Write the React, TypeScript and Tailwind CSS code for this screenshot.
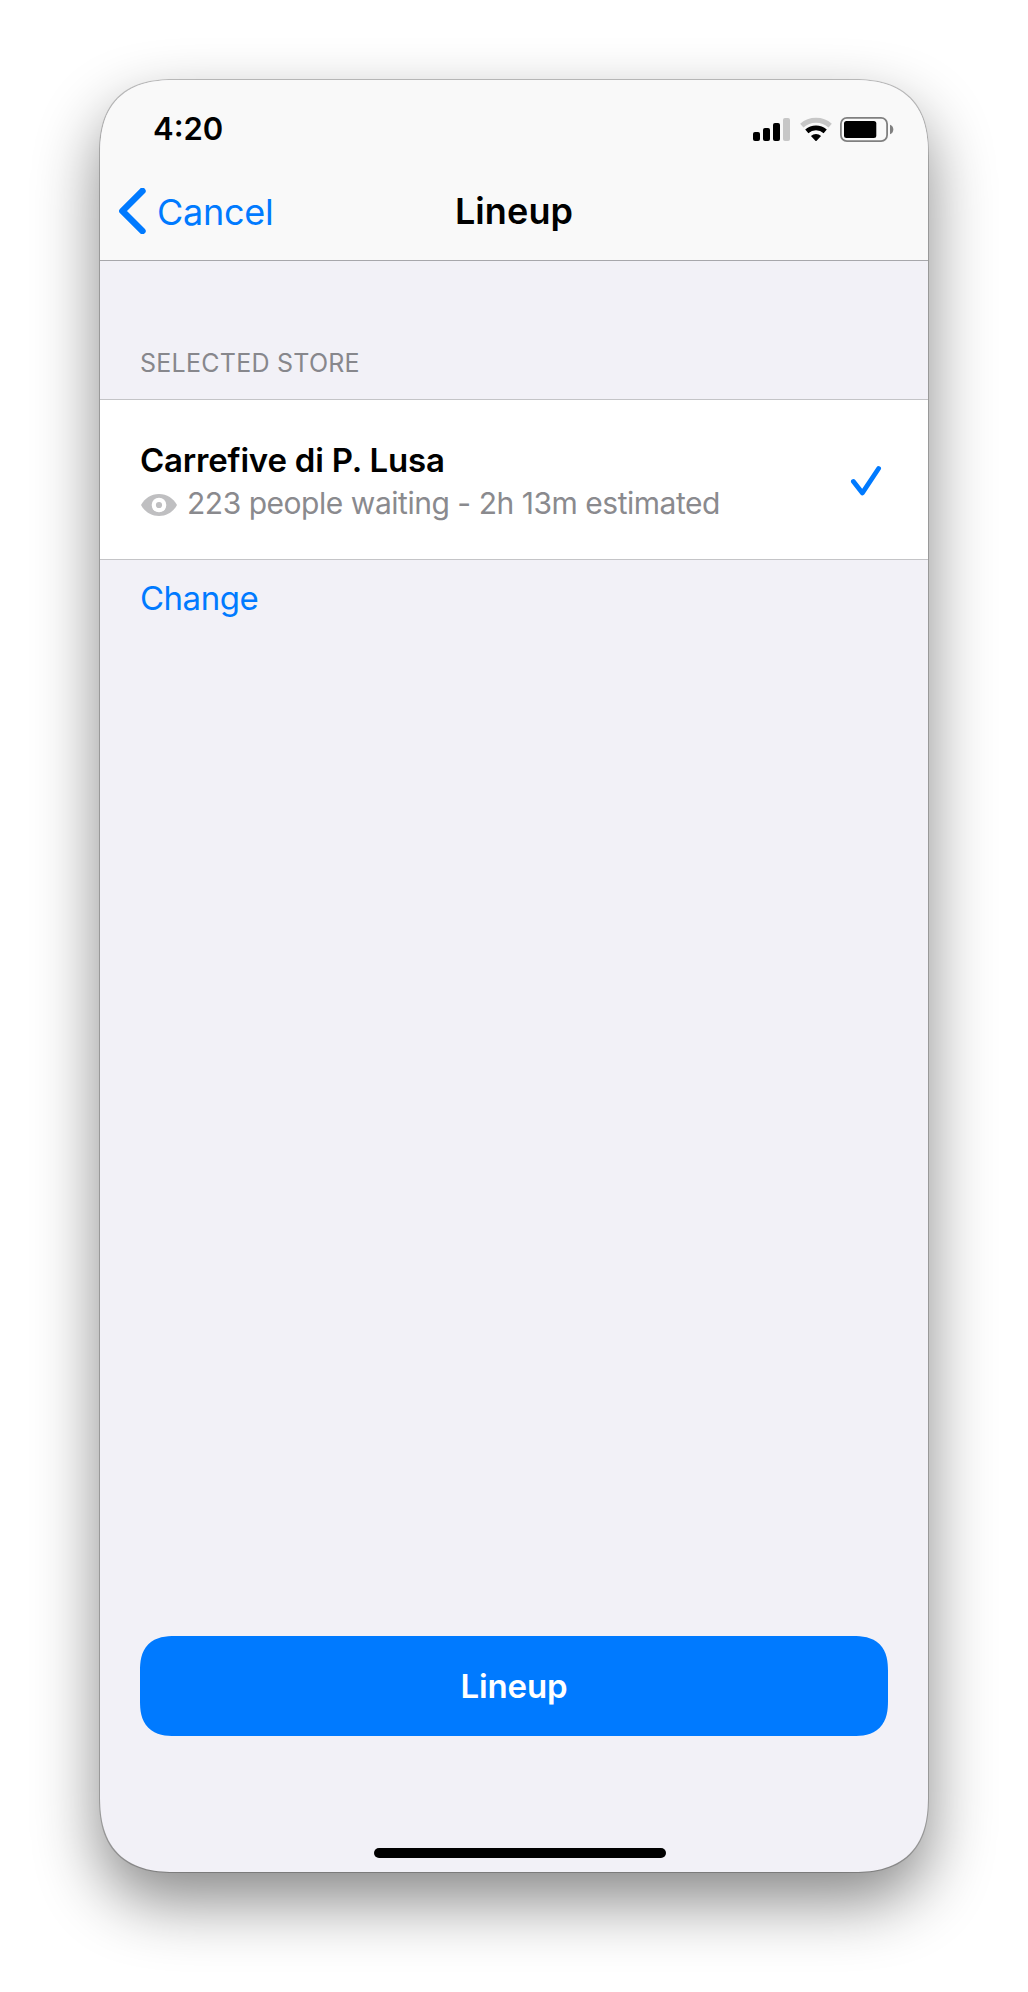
function StatusIcons() {
  return (
    <svg className="h-[28px] w-[144px]" viewBox="752 115 144 28" fill="none">
      <rect x="753" y="132" width="7" height="9" rx="2" fill="#000" />
      <rect x="763" y="128" width="7" height="13" rx="2" fill="#000" />
      <rect x="773" y="123" width="7" height="18" rx="2" fill="#000" />
      <rect x="783" y="118" width="7" height="23" rx="2" fill="#c7c7c7" />
      <path d="M801.8 125.6A21.6 21.6 0 0 1 830.2 125.6" stroke="#c7c7c7" strokeWidth="5" />
      <path d="M806.8 131.4A14 14 0 0 1 825.2 131.4" stroke="#000" strokeWidth="4.8" />
      <path d="M810.9 135.9A8 8 0 0 1 821.1 135.9L816.6 140.7Q816 141.3 815.4 140.7Z" fill="#000" />
      <rect x="840.9" y="117.9" width="46.2" height="23.2" rx="6" stroke="#808080" strokeWidth="1.8" />
      <rect x="844" y="121" width="32.3" height="17" rx="2.5" fill="#000" />
      <path d="M890 124.8Q893.3 126 893.3 129.5Q893.3 133 890 134.2Z" fill="#808080" />
    </svg>
  );
}

function Header() {
  return (
    <header className="border-b border-[#a7a7ab] bg-[#f9f9f9]">
      <div className="flex h-24 items-center justify-between pt-[2px] pr-8 pl-[53px]">
        <span className="text-[31px] font-semibold">4:20</span>
        <StatusIcons />
      </div>
      <nav className="grid h-[84px] grid-cols-[1fr_auto_1fr] items-center pb-[14px]">
        <button className="flex items-center gap-[11px] pl-[18px] text-[#007aff]">
          <svg className="h-[46px] w-[28px]" viewBox="118 188 28 46" fill="none">
            <path
              d="M142.4 191L122.4 211L142.4 231"
              stroke="currentColor"
              strokeWidth="6.6"
              strokeLinecap="round"
              strokeLinejoin="round"
            />
          </svg>
          <span className="pt-[2px] text-[36px] leading-[44px] tracking-[-0.27px]">Cancel</span>
        </button>
        <h1 className="text-[36px] leading-[44px] font-semibold tracking-[0.1px]">Lineup</h1>
      </nav>
    </header>
  );
}

function StoreRow() {
  return (
    <div className="flex h-[161px] items-center justify-between border-y border-[#c4c4c7] bg-white pr-[46px] pl-10">
      <div className="pt-[2px]">
        <p className="text-[33px] leading-10 font-semibold tracking-[-0.2px]">Carrefive di P. Lusa</p>
        <p className="mt-[5px] flex items-center text-[30px] leading-9 tracking-[-0.47px] text-[#8a8a8e]">
          <svg className="mt-1 mr-[10px] ml-px h-[22px] w-[36px]" viewBox="0 0 36 22">
            <path d="M0 11C3.5 4.5 10 0 18 0S32.5 4.5 36 11C32.5 17.5 26 22 18 22S3.5 17.5 0 11Z" fill="#bfbfc1" />
            <circle cx="18" cy="11" r="7.3" fill="#fff" />
            <circle cx="18" cy="11" r="3.1" fill="#bfbfc1" />
          </svg>
          223 people waiting - 2h 13m estimated
        </p>
      </div>
      <svg className="h-8 w-[32px]" viewBox="850 463.5 32 32" fill="none">
        <path
          d="M853.4 481L862.4 492.4L878.6 468"
          stroke="#007aff"
          strokeWidth="4.8"
          strokeLinecap="round"
          strokeLinejoin="round"
        />
      </svg>
    </div>
  );
}

export default function App() {
  return (
    <div className="flex h-[1992px] w-[1028px] justify-center overflow-hidden bg-white pt-20 font-['Inter',sans-serif] text-black">
      <main className="flex h-[1792px] w-[828px] flex-col overflow-hidden rounded-[77px] bg-[#f2f1f7] shadow-[0_0_0_1px_rgba(0,0,0,0.22),0_29px_65px_rgba(0,0,0,0.47)] [corner-shape:superellipse(1.35)]">
        <Header />
        <h2 className="mt-[87px] mb-[21px] pl-10 text-[25px] leading-[30px] tracking-[0.25px] text-[#87878c]">
          SELECTED STORE
        </h2>
        <StoreRow />
        <button className="mt-[18px] ml-10 self-start text-[33px] leading-10 tracking-[-0.5px] text-[#007aff]">
          Change
        </button>
        <div className="mt-auto px-10">
          <button className="h-[100px] w-full rounded-[35px] bg-[#007aff] pt-[2px] text-[33px] font-semibold tracking-[-0.1px] text-white [corner-shape:superellipse(1.35)]">
            Lineup
          </button>
        </div>
        <div className="mt-[112px] mb-[14px] ml-[274px] h-[10px] w-[292px] rounded-full bg-black" />
      </main>
    </div>
  );
}
